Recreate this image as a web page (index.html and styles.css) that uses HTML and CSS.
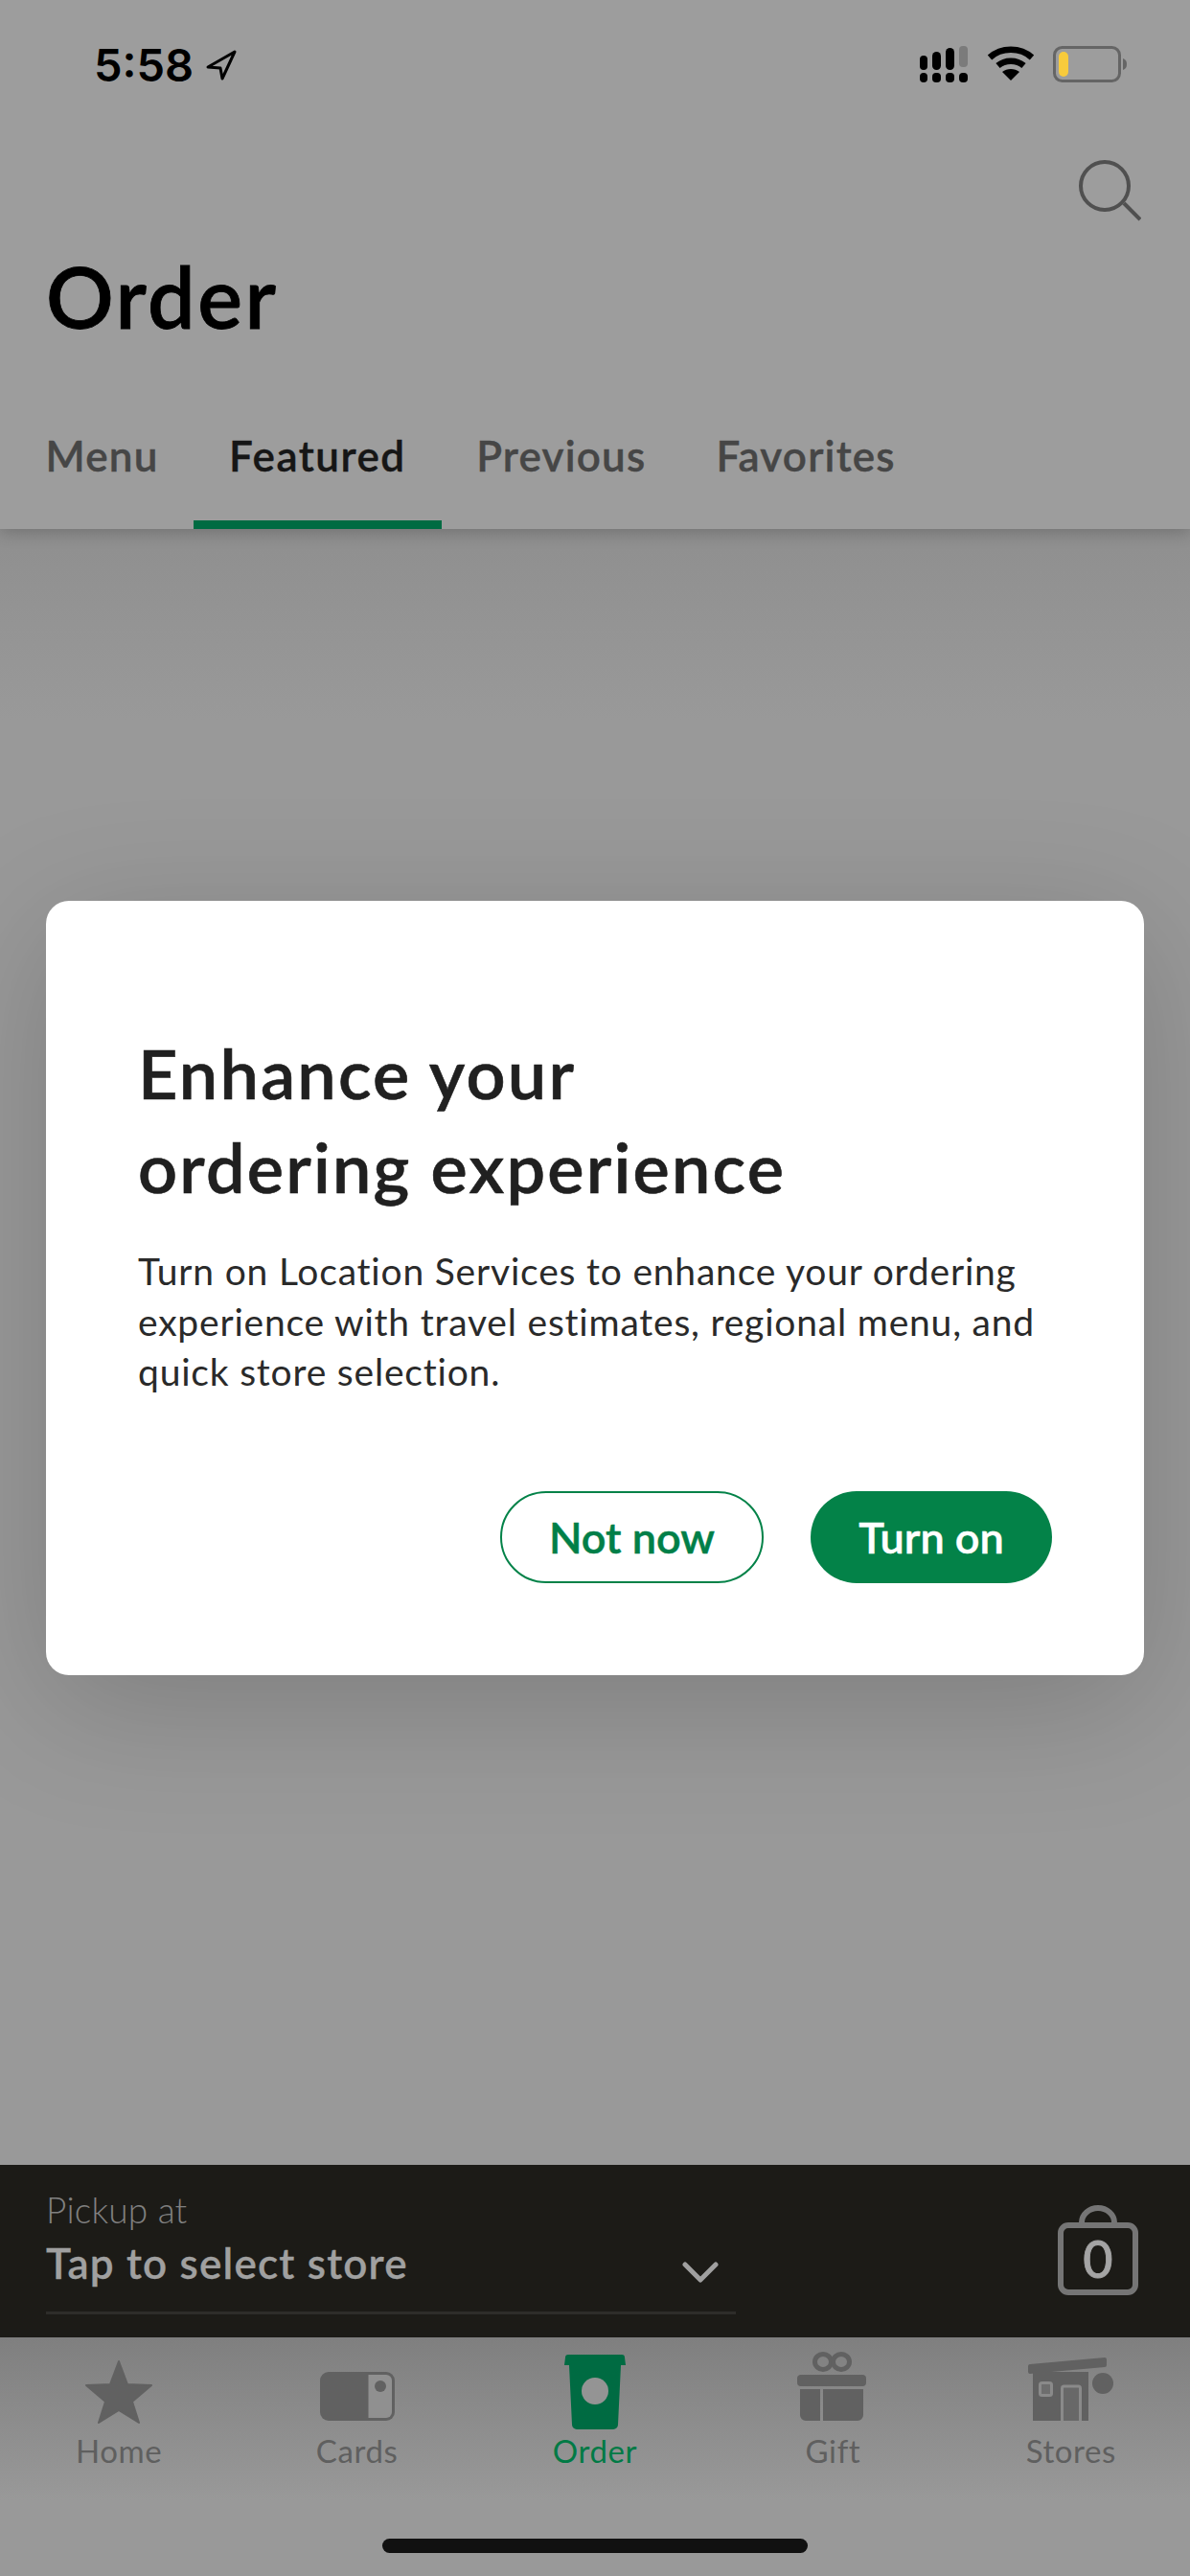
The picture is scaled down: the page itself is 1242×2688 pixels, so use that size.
FILE: index.html
```html
<!DOCTYPE html>
<html lang="en">
<head>
<meta charset="utf-8">
<title>Order</title>
<link rel="stylesheet" href="styles.css">
</head>
<body>
<div class="phone">
  <header class="top">
    <div class="status">
      <div class="status-left">
        <span class="time">5:58</span>
        <svg class="loc" width="34" height="34" viewBox="0 0 34 34"><path d="M31 3 3 19l13 1 2 11z" fill="none" stroke="#000" stroke-width="3" stroke-linejoin="round"/></svg>
      </div>
      <div class="status-right">
        <svg width="52" height="38" viewBox="0 0 52 38"><g fill="#000"><rect x="1" y="10" width="8" height="15" rx="4"/><rect x="14" y="6" width="9" height="19" rx="4.500"/><rect x="28" y="2" width="9" height="23" rx="4.500"/><rect x="1" y="28" width="8" height="10" rx="4"/><rect x="14" y="28" width="9" height="10" rx="4"/><rect x="28" y="28" width="9" height="10" rx="4"/><rect x="42" y="28" width="9" height="10" rx="4"/></g><rect x="42" y="0" width="9" height="22" rx="4" fill="#7b7b7b"/></svg>
        <svg width="50" height="36" viewBox="0 0 50 36"><g fill="none" stroke="#000" stroke-width="6.500"><path d="M3 12C15 1 35 1 47 12"/><path d="M11.500 20.500C19 14 31 14 38.500 20.500"/></g><path d="M25 36 16 27C21 23 29 23 34 27z" fill="#000"/></svg>
        <svg width="78" height="38" viewBox="0 0 78 38"><rect x="1.500" y="1.500" width="68" height="35" rx="8" fill="none" stroke="#656565" stroke-width="3"/><rect x="6" y="6" width="10" height="26" rx="5" fill="#f8cb3c"/><path d="M73 13c3 1 4 3 4 6s-1 5-4 6z" fill="#656565"/></svg>
      </div>
    </div>
    <div class="search-row">
      <svg width="66" height="66" viewBox="0 0 66 66"><circle cx="28" cy="28" r="25" fill="none" stroke="#505050" stroke-width="4"/><path d="M48 46 65 63" stroke="#505050" stroke-width="4" fill="none"/></svg>
    </div>
    <h1 class="title">Order</h1>
    <nav class="tabs">
      <a class="tab">Menu</a>
      <a class="tab tab-active">Featured</a>
      <a class="tab">Previous</a>
      <a class="tab">Favorites</a>
    </nav>
  </header>

  <main class="content">
    <section class="modal">
      <h2 class="modal-title">Enhance your<br>ordering experience</h2>
      <p class="modal-text">Turn on Location Services to enhance your ordering experience with travel estimates, regional menu, and quick store selection.</p>
      <div class="modal-actions">
        <button class="btn btn-outline">Not now</button>
        <button class="btn btn-solid">Turn on</button>
      </div>
    </section>
  </main>

  <section class="pickup">
    <div class="pickup-store">
      <div class="pickup-label">Pickup at</div>
      <div class="pickup-row">
        <span class="pickup-name">Tap to select store</span>
        <svg width="38" height="24" viewBox="0 0 38 24"><path d="M3 4 19 20 35 4" fill="none" stroke="#a0a0a0" stroke-width="5" stroke-linecap="round" stroke-linejoin="round"/></svg>
      </div>
    </div>
    <div class="bag">
      <svg width="84" height="94" viewBox="0 0 84 94"><path d="M25 20v-2a17 15 0 0 1 34 0v2" fill="none" stroke="#757575" stroke-width="6"/><rect x="3" y="21" width="78" height="70" rx="8" fill="none" stroke="#757575" stroke-width="6"/></svg>
      <span class="bag-count">0</span>
    </div>
  </section>

  <nav class="tabbar">
    <a class="nav-item">
      <svg class="nav-icon" width="90" height="84" viewBox="0 0 90 84"><path d="M45 11 54 35 79 36 59 53 66 75 45 62 24 75 31 53 11 36 36 35z" fill="#616161" stroke="#616161" stroke-width="2" stroke-linejoin="round"/></svg>
      <span>Home</span>
    </a>
    <a class="nav-item">
      <svg class="nav-icon" width="90" height="84" viewBox="0 0 90 84"><path d="M15 22h60a9 9 0 0 1 9 9v33a9 9 0 0 1-9 9H15a9 9 0 0 1-9-9V31a9 9 0 0 1 9-9z" fill="#616161"/><path d="M56.500 25H75a6 6 0 0 1 6 6v33a6 6 0 0 1-6 6H56.500z" fill="#909090"/><circle cx="69" cy="37" r="6" fill="#616161"/></svg>
      <span>Cards</span>
    </a>
    <a class="nav-item nav-active">
      <svg class="nav-icon" width="90" height="84" viewBox="0 0 90 84"><path d="M17 4h56a3 3 0 0 1 3 3l1 8H72l-3 62a5 5 0 0 1-5 5H26a5 5 0 0 1-5-5L18 15h-5l1-8a3 3 0 0 1 3-3z" fill="#006b42"/><circle cx="45" cy="42" r="14" fill="#949494"/></svg>
      <span>Order</span>
    </a>
    <a class="nav-item">
      <svg class="nav-icon" width="90" height="84" viewBox="0 0 90 84"><g fill="none" stroke="#616161" stroke-width="5"><ellipse cx="35" cy="11.500" rx="8.500" ry="8"/><ellipse cx="54" cy="11.500" rx="8.500" ry="8"/></g><rect x="8" y="25" width="72" height="12" rx="4" fill="#616161"/><path d="M11 40h21v33H17a6 6 0 0 1-6-6zM35 40h42v27a6 6 0 0 1-6 6H35z" fill="#616161"/></svg>
      <span>Gift</span>
    </a>
    <a class="nav-item">
      <svg class="nav-icon" width="90" height="84" viewBox="0 0 90 84"><path d="M0 16a2 2 0 0 1 2-2l78-7a2 2 0 0 1 2 2v6a2 2 0 0 1-2 2L2 24a2 2 0 0 1-2-2zM5 22h58v51H5z" fill="#616161"/><rect x="12.500" y="33.500" width="12" height="13" rx="2" fill="#6e6e6e" stroke="#8a8a8a" stroke-width="3"/><path d="M35.500 73V39a2 2 0 0 1 2-2h15a2 2 0 0 1 2 2v34" fill="#686868" stroke="#8a8a8a" stroke-width="3"/><circle cx="78" cy="34" r="11" fill="#616161"/></svg>
      <span>Stores</span>
    </a>
    <div class="home-bar"></div>
  </nav>
</div>
</body>
</html>
```

FILE: styles.css
```css
* { box-sizing: border-box; }
html, body { margin: 0; padding: 0; }
body { font-family: "Lato", "Open Sans", sans-serif; background: #9c9c9c; }
.phone { width: 1242px; height: 2688px; display: flex; flex-direction: column; overflow: hidden; background: #999; }

.top { height: 552px; background: #9d9d9d; position: relative; z-index: 2; box-shadow: 0 4px 16px rgba(0,0,0,.2); display: flex; flex-direction: column; flex: none; }
.status { display: flex; justify-content: space-between; align-items: flex-start; height: 166px; padding: 48px 65px 0 98px; }
.status-left { display: flex; align-items: center; gap: 12px; }
.time { font-family: "Inter", sans-serif; font-size: 47px; font-weight: 600; line-height: 40px; color: #000; }
.status-right { display: flex; align-items: flex-start; gap: 19px; }
.search-row { display: flex; justify-content: flex-end; height: 66px; padding-right: 51px; }
.title { margin: 32px 0 0 48px; font-size: 88px; line-height: 90px; font-weight: 600; letter-spacing: 2.500px; color: #000; -webkit-text-stroke: .8px #000; }
.tabs { display: flex; margin: auto 0 0 11px; }
.tab { height: 102px; padding: 0 36.500px; font-size: 44px; line-height: 50px; font-weight: 600; letter-spacing: 1.200px; color: #464646; -webkit-text-stroke: .4px currentColor; }
.tab-active { padding: 0 37px; letter-spacing: 1.500px; color: #161616; border-bottom: 9px solid #006b42; }

.content { flex: 1; display: flex; flex-direction: column; justify-content: flex-start; padding: 388px 48px 0; background: linear-gradient(#8f8f8f, #999 200px); }
.modal { position: relative; height: 808px; background: #fff; border-radius: 24px; padding: 130px 96px 0; box-shadow: 0 30px 140px rgba(0,0,0,.18); }
.modal-title { margin: 0; font-size: 72px; line-height: 98px; font-weight: 600; letter-spacing: 2.200px; color: #202020; -webkit-text-stroke: .6px #202020; }
.modal-text { margin: 34px 0 0; font-size: 39px; line-height: 52.500px; font-weight: 400; letter-spacing: .8px; color: #2a2a2a; }
.modal-actions { display: flex; justify-content: flex-end; gap: 49px; margin-top: 98px; }
.btn { height: 96px; border-radius: 48px; font-family: inherit; font-size: 45px; font-weight: 600; padding: 0; -webkit-text-stroke: .5px currentColor; }
.btn-outline { width: 275px; background: #fff; border: 2px solid #038248; color: #007f48; }
.btn-solid { width: 252px; background: #038248; border: 0; color: #fff; }

.pickup { height: 180px; flex: none; background: #1c1b17; display: flex; justify-content: space-between; position: relative; z-index: 1; padding: 0 54px 0 48px; }
.pickup-store { width: 720px; height: 156px; border-bottom: 3px solid #2e2d2a; padding-top: 26px; }
.pickup-label { font-size: 37px; line-height: 42px; font-weight: 300; letter-spacing: .2px; color: #808080; }
.pickup-row { display: flex; justify-content: space-between; align-items: flex-start; padding-right: 18px; margin-top: 6px; }
.pickup-name { font-size: 44px; line-height: 56px; font-weight: 600; letter-spacing: 1.200px; color: #a0a0a0; -webkit-text-stroke: .3px #a0a0a0; }
.pickup-row svg { margin-top: 26px; }
.bag { position: relative; margin-top: 42px; width: 84px; height: 94px; }
.bag-count { position: absolute; left: 0; right: 0; top: 26px; text-align: center; font-size: 54px; line-height: 60px; font-weight: 500; color: #a4a4a4; -webkit-text-stroke: .8px #a4a4a4; }

.tabbar { position: relative; flex: none; height: 249px; display: grid; grid-template-columns: repeat(5, 1fr); align-items: start; padding-top: 14px; background: linear-gradient(#7f7f7f, #999 170px); }
.nav-item { display: flex; flex-direction: column; align-items: center; font-size: 33px; line-height: 36px; letter-spacing: .6px; color: #5f5f5f; }
.nav-icon { display: block; height: 84px; margin-bottom: 2px; }
.nav-active { color: #007a45; }
.home-bar { position: absolute; left: 399px; bottom: 24px; width: 444px; height: 15px; border-radius: 8px; background: #111; }
```
